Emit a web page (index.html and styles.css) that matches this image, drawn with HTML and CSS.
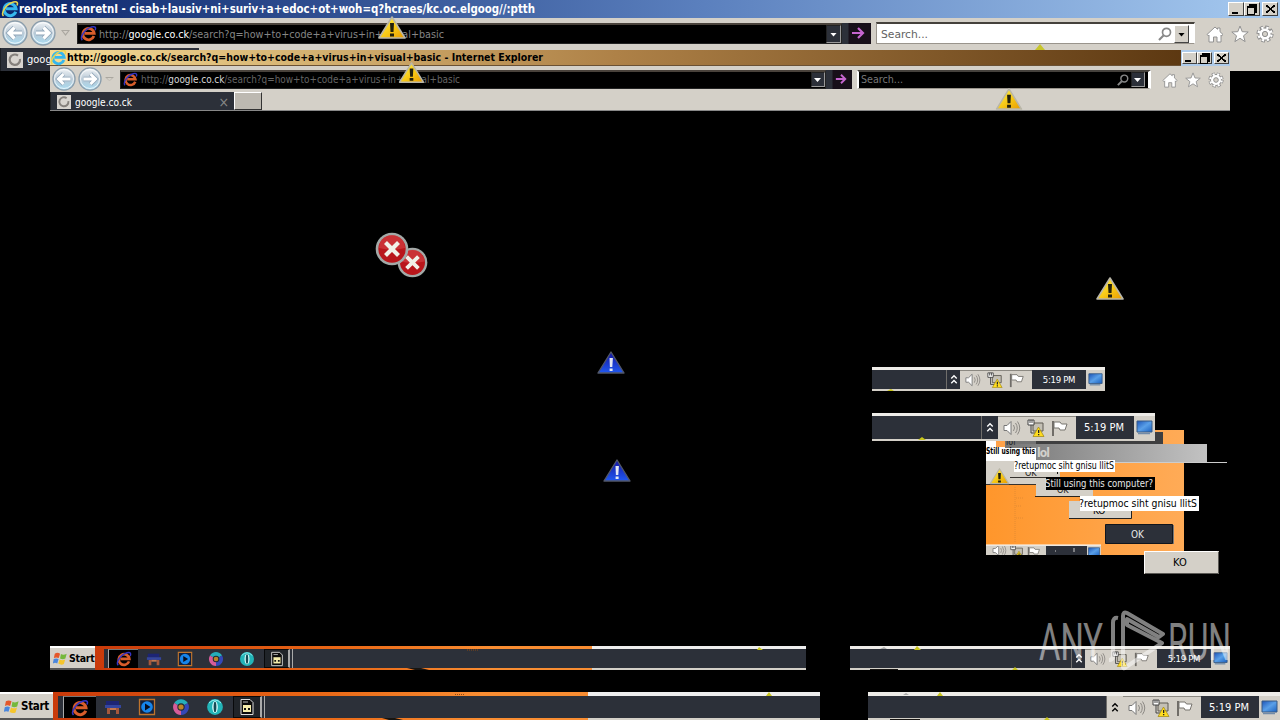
FILE: index.html
```
<!DOCTYPE html>
<html lang="en">
<head>
<meta charset="utf-8">
<title>Desktop</title>
<link rel="stylesheet" href="styles.css">
</head>
<body>
<svg class="defs" aria-hidden="true">
<defs>
<linearGradient id="yel" x1="0" y1="0" x2="1" y2="1"><stop offset="0" stop-color="#fff75a"/><stop offset=".55" stop-color="#f7c815"/><stop offset="1" stop-color="#e89a00"/></linearGradient>
<linearGradient id="blu" x1="0" y1="0" x2="0" y2="1"><stop offset="0" stop-color="#1414a0"/><stop offset="1" stop-color="#2058f0"/></linearGradient>
<linearGradient id="orb" x1="0" y1="0" x2="0" y2="1"><stop offset="0" stop-color="#f4f6f8"/><stop offset=".5" stop-color="#b9c9d6"/><stop offset="1" stop-color="#a8dcf2"/></linearGradient>
<linearGradient id="scr" x1="0" y1="0" x2="1" y2="1"><stop offset="0" stop-color="#1c54b8"/><stop offset=".5" stop-color="#5aa0e8"/><stop offset="1" stop-color="#1a60c0"/></linearGradient>
</defs>
<symbol id="warn" viewBox="0 0 28 24"><path d="M14 1 27 22H1Z" fill="url(#yel)" stroke="#b9b6a8" stroke-width="1.6" stroke-linejoin="round"/><path d="M12 7h4l-.5 9h-3zM12 17.500h4v3h-4z" fill="#22200c"/></symbol>
<symbol id="warnb" viewBox="0 0 28 24"><path d="M14 1 27 22H1Z" fill="url(#blu)" stroke="#515768" stroke-width="1.4" stroke-linejoin="round"/><path d="M12.5 7h3.400l-.6 9h-2.400zM12.600 17.500h3v2.600h-3z" fill="#e4e8f4"/></symbol>
<symbol id="err" viewBox="0 0 34 34"><circle cx="17" cy="17" r="16.300" fill="#a3aaa8"/><circle cx="17" cy="17" r="13.700" fill="#b9161b"/><path d="M4 16a13 13 0 0 1 26 0q-13 3-26 0z" fill="#d9484a" opacity=".55"/><path d="m10.500 10.500 13 13m0-13-13 13" stroke="#f1f1e8" stroke-width="4.200"/></symbol>
<symbol id="ie" viewBox="0 0 18 18"><path d="M14.700 11.700A6 6 0 1 1 15 8.800H5" fill="none" stroke="currentColor" stroke-width="3"/><path d="M2.500 16C-.5 13 5 4 12.500 2c4-1 4.500 1 3.500 3.500" fill="none" stroke="var(--ring)" stroke-width="1.600"/></symbol>
<symbol id="back" viewBox="0 0 26 26"><circle cx="13" cy="13" r="12" fill="url(#orb)" stroke="#8b9dab" stroke-width="1.300"/><circle cx="13" cy="13" r="10.300" fill="none" stroke="#fff" stroke-opacity=".8"/><path d="M20 13H7m5.500-5.500L7 13l5.500 5.500" fill="none" stroke="#8fa5b8" stroke-width="4.800"/><path d="M20 13H7m5.500-5.500L7 13l5.500 5.500" fill="none" stroke="#fff" stroke-width="3.200"/></symbol>
<symbol id="go" viewBox="0 0 14 14"><path d="M1 7h11M7 2l5 5-5 5" fill="none" stroke="#c565cf" stroke-width="2.200"/></symbol>
<symbol id="mag" viewBox="0 0 14 14"><circle cx="8.500" cy="5.300" r="4" fill="none" stroke="#888" stroke-width="1.700"/><path d="m5.500 8.500-4.500 4.500" stroke="#888" stroke-width="2.200"/></symbol>
<symbol id="home" viewBox="0 0 18 18"><path d="m1 9.500 8-7.500 2.500 2.300V3H14v3.700l3 2.800-1.300 1.300L15 10v7h-4v-5H7.500v5H3v-7l-.8.800z" fill="#fff" stroke="#929292" stroke-width="1"/></symbol>
<symbol id="star" viewBox="0 0 18 18"><path d="m9 1 2.200 5.700 6 .3-4.700 3.800 1.600 5.800L9 13.300l-5.100 3.300 1.600-5.800L.8 7l6-.3z" fill="#fff" stroke="#929292"/></symbol>
<symbol id="gear" viewBox="0 0 18 18"><circle cx="9" cy="9" r="6.900" fill="none" stroke="#8e8e8e" stroke-width="3.400" stroke-dasharray="3.400 2.020"/><circle cx="9" cy="9" r="5.900" fill="none" stroke="#8e8e8e" stroke-width="1.500"/><circle cx="9" cy="9" r="6.500" fill="none" stroke="#fff" stroke-width="2.400" stroke-dasharray="2.200 2.905" stroke-dashoffset="-.6"/><circle cx="9" cy="9" r="4.200" fill="none" stroke="#fff" stroke-width="2.800"/><circle cx="9" cy="9" r="2.600" fill="#d4d0c8" stroke="#8e8e8e"/></symbol>
<symbol id="spin" viewBox="0 0 16 16"><path d="M0 0h16v16H0z" fill="#d8d4cf"/><path d="M11 3.600A5.200 5.200 0 1 0 13 7" fill="none" stroke="#85807c" stroke-width="2.200"/></symbol>
<symbol id="win" viewBox="0 0 17 16"><path d="M2 2.500q3-2 6 0L6.500 7.500q-3-1.500-5.500 0z" fill="#e4572a"/><path d="M9 3q3 1.500 6.500-.5L14 8q-3 1.500-6 0z" fill="#74b83c"/><path d="M.8 8.700q3-1.500 5.500 0l-1.500 5q-2.500-1.500-5 0z" fill="#4a86dc"/><path d="M7.500 9q3 1.800 6.300 0l-1.500 5.300q-3 1.500-6.300-.5z" fill="#f5c52c"/></symbol>
<symbol id="lib" viewBox="0 0 18 18"><path d="M2 3h13v4H2z" fill="#1d2575"/><path d="M1 7h16v3H1z" fill="#34459e"/><path d="M3 10h3v6H3zm9 0h3v6h-3z" fill="#a4583c"/><path d="M6 10h6v2H6z" fill="#c57850"/></symbol>
<symbol id="media" viewBox="0 0 18 18"><path d="M1.500 1.500h15v15h-15z" fill="#14213c" stroke="#be742d" stroke-width="1.300"/><circle cx="9" cy="9" r="5.800" fill="#1685ec"/><path d="m7 5.500 5.500 3.500L7 12.500z" fill="#080e20"/></symbol>
<symbol id="chrome" viewBox="0 0 18 18"><path d="M9 9 2.200 5.100A7.900 7.900 0 0 1 15.800 5.100z" fill="#25aeba"/><path d="M9 9 2.200 5.100A7.900 7.900 0 0 0 9 17z" fill="#d65c99"/><path d="M9 9 15.800 5.100A7.900 7.900 0 0 1 9 17z" fill="#3448b8"/><circle cx="9" cy="9" r="3.700" fill="#222b31"/><circle cx="9" cy="9" r="2.600" fill="#bd8427"/></symbol>
<symbol id="opera" viewBox="0 0 18 18"><circle cx="9" cy="9" r="7.900" fill="#22b4b8"/><path d="M3 5Q9-1 15 5" stroke="#94eef0" fill="none"/><ellipse cx="9" cy="9" rx="2.800" ry="6" fill="#d8ffff"/><ellipse cx="9" cy="9" rx="1.400" ry="5.300" fill="#174b56"/></symbol>
<symbol id="file" viewBox="0 0 18 18"><path d="M3 1.500h9l3 3v12H3z" fill="#0b0b0b" stroke="#ddd"/><path d="M5 7h8v7H5z" fill="#f5edac"/><path d="M6 10h2v2H6zm4 0h2v2h-2z" fill="#111"/><path d="M5 4h5" stroke="#bbb"/></symbol>
<symbol id="chev" viewBox="0 0 8 12"><path d="m1 5 3-3 3 3M1 10l3-3 3 3" fill="none" stroke="currentColor" stroke-width="1.500"/></symbol>
<symbol id="sound" viewBox="0 0 18 16"><path d="M1 5.500h3L8 1.500v13L4 10.500H1z" fill="#fff" stroke="#777"/><path d="M10.500 5q2 3 0 6M12.500 3q3.500 5 0 10M14.500 1.500q4.500 6.500 0 13" fill="none" stroke="#8c8984"/></symbol>
<symbol id="net" viewBox="0 0 18 18"><path d="M6 4h10v8H6z" fill="#c4c0b5" stroke="#5e5a52"/><path d="M1 1h6v5H1z" fill="#fff" stroke="#444"/><path d="M3 1v3m2-3v3M4 6v8h6" stroke="#444" fill="none"/><path d="m11.500 8 5.500 9.500H6z" fill="#ffdc20" stroke="#9c8410" stroke-width=".7"/><path d="M11 11h1.300v3H11zm0 4h1.300v1.300H11z" fill="#222"/></symbol>
<symbol id="flag" viewBox="0 0 18 16"><path d="M2 1v15" stroke="#706d68" stroke-width="2"/><path d="M3 2h6l1.500 2H16l-2 6H9L8 8H3z" fill="#fff" stroke="#77746f"/></symbol>
<symbol id="mon" viewBox="0 0 17 15"><path d="M1 1h15v11H1z" fill="url(#scr)" stroke="#385a84"/><path d="M2 13.500h12" stroke="#718ba8" stroke-width="1.500"/></symbol>
</svg>

<main class="desktop">
<section class="window main-window">
  <header class="title">
    <svg class="logo"><use href="#ie"/></svg>
    <svg class="caption" width="520" height="18"><text x="0" y="13" textLength="516" lengthAdjust="spacingAndGlyphs">rerolpxE tenretnI - cisab+lausiv+ni+suriv+a+edoc+ot+woh=q?hcraes/kc.oc.elgoog//:ptth</text></svg>
    <div class="controls"><i class="min"></i><i class="restore"></i><i class="close"></i></div>
  </header>
  <div class="nav">
    <svg class="orb"><use href="#back"/></svg><svg class="orb next"><use href="#back"/></svg><i class="hist"></i>
    <div class="address"><svg class="fav"><use href="#ie"/></svg><svg class="url" width="360" height="20"><text y="14" textLength="345" lengthAdjust="spacingAndGlyphs">http://<tspan class="host">google.co.ck</tspan>/search?q=how+to+code+a+virus+in+visual+basic</text></svg><b class="drop"></b></div>
    <div class="go"><svg><use href="#go"/></svg></div>
    <div class="search"><svg class="query" width="60" height="20"><text y="14" textLength="47" lengthAdjust="spacingAndGlyphs">Search...</text></svg><svg class="mag"><use href="#mag"/></svg><b class="drop light"></b></div>
    <div class="tools"><svg><use href="#home"/></svg><svg><use href="#star"/></svg><svg><use href="#gear"/></svg></div>
  </div>
  <div class="tabs"><div class="tab"><svg class="spin"><use href="#spin"/></svg><span>google.co.ck</span></div></div>
</section>

<section class="window ghost-window">
  <header class="title">
    <svg class="logo"><use href="#ie"/></svg>
    <svg class="caption" width="480" height="16"><text x="0" y="11" textLength="476" lengthAdjust="spacingAndGlyphs">http://google.co.ck/search?q=how+to+code+a+virus+in+visual+basic - Internet Explorer</text></svg>
    <div class="controls"><i class="min"></i><i class="restore"></i><i class="close"></i></div>
  </header>
  <div class="nav">
    <svg class="orb"><use href="#back"/></svg><svg class="orb next"><use href="#back"/></svg><i class="hist"></i>
    <div class="address"><svg class="fav"><use href="#ie"/></svg><svg class="url" width="330" height="17"><text y="12" textLength="319" lengthAdjust="spacingAndGlyphs">http://<tspan class="host">google.co.ck</tspan>/search?q=how+to+code+a+virus+in+visual+basic</text></svg><b class="drop"></b></div>
    <div class="go"><svg><use href="#go"/></svg></div>
    <div class="search"><svg class="query" width="60" height="17"><text y="12" textLength="42" lengthAdjust="spacingAndGlyphs">Search...</text></svg><svg class="mag"><use href="#mag"/></svg><b class="drop"></b></div>
    <div class="tools"><svg><use href="#home"/></svg><svg><use href="#star"/></svg><svg><use href="#gear"/></svg></div>
  </div>
  <div class="tabs"><div class="tab"><svg class="spin"><use href="#spin"/></svg><svg width="60" height="18"><text y="13" textLength="57" lengthAdjust="spacingAndGlyphs">google.co.ck</text></svg><em>×</em></div><i class="newtab"></i></div>
</section>

<svg class="sprite w1"><use href="#warn"/></svg>
<svg class="sprite w2"><use href="#warn"/></svg>
<svg class="sprite w3"><use href="#warn"/></svg>
<svg class="sprite w4"><use href="#warn"/></svg>
<svg class="sprite b1"><use href="#warnb"/></svg>
<svg class="sprite b2"><use href="#warnb"/></svg>
<svg class="sprite e2"><use href="#err"/></svg>
<svg class="sprite e1"><use href="#err"/></svg>
<i class="tip"></i>

<section class="popup">
  <svg width="245" height="150" viewBox="986 430 245 150">
    <defs>
      <linearGradient id="bar"><stop offset="0" stop-color="#777"/><stop offset="1" stop-color="#c2c2c2"/></linearGradient>
      <linearGradient id="wall"><stop offset="0" stop-color="#ff962b"/><stop offset="1" stop-color="#ffab57"/></linearGradient>
    </defs>
    <path d="M986 430h198v125H986z" fill="url(#wall)"/>
    <path d="M1015 487v55M1016 498h7m-7 8h5m-5 12h7" stroke="#e48b32" stroke-dasharray="1 1" fill="none"/>
    <path d="M1005 432h158v12h-158z" fill="#3f3f40"/><path d="M1005 441h31v8h-31z" fill="#737373"/>
    <path d="M986 441h10v5h40v17h-50z" fill="#fff"/><path d="M996 441h9v6h-9z" fill="#ffa34a"/>
    <path d="M1005 444h202v4h-202zM1036 444h171v18h-171z" fill="url(#bar)"/><path d="M1036 462.500h191" stroke="#ccc"/>
    <text x="1006" y="445" class="tiny">lol</text>
    <text x="1037" y="457" class="bar-title" textLength="13">lol</text>
    <text x="986" y="454" class="bold" textLength="49" lengthAdjust="spacingAndGlyphs">Still using this</text>
    <path d="M986 461h74v23h-74z" fill="#d4d0c8"/><path d="M986 484.500h50M1010 477.500h48" stroke="#36322e"/>
    <text x="1025" y="476" class="tiny">OK</text>
    <path d="M1036 479h57v17h-57z" fill="#d4d0c8"/><path d="M1035 496.500h58" stroke="#29251f"/><text x="1057" y="493" class="tiny">OK</text>
    <path d="M1065 462v7M1057.500 462v12" stroke="#111"/>
    <path d="M1014 460h101v12h-101z" fill="#fff"/><text x="1014" y="469" class="word" textLength="100" lengthAdjust="spacingAndGlyphs">?retupmoc siht gnisu llitS</text>
    <path d="M1046 477h109v13h-109z" fill="#000"/><text x="1045" y="487" class="word inv" textLength="108" lengthAdjust="spacingAndGlyphs">Still using this computer?</text>
    <path d="M1069 501h62v17h-62z" fill="#d4d0c8"/><path d="M1069 518.500h62.500v-8" fill="none" stroke="#222"/><text x="1093" y="514" class="word">KO</text>
    <path d="M1080 496h119v15h-119z" fill="#fff"/><text x="1079" y="507" class="word big" textLength="118" lengthAdjust="spacingAndGlyphs">?retupmoc siht gnisu llitS</text>
    <path d="M1105.500 524.500h67v19h-67z" fill="#2c3039" stroke="#11151c"/><path d="M1173.500 525v19" stroke="#777"/><text x="1131" y="538" class="word inv">OK</text>
    <use href="#warn" x="988" y="468" width="23" height="17"/>
    <path d="M986 545h115v10H986z" fill="#d4d0c8"/><path d="M986 545h115" stroke="#fff"/><path d="M1046 546h41v9h-41z" fill="#2c3039"/>
    <svg x="986" y="546" width="115" height="9" viewBox="986 546 115 9"><use href="#sound" x="992" y="544" width="15" height="13"/><use href="#net" x="1010" y="545" width="14" height="14"/><use href="#flag" x="1027" y="546" width="14" height="13"/><use href="#mon" x="1087" y="547" width="14" height="11"/><path d="M1055 551h1m18-3v4" stroke="#ccc"/></svg>
    <path d="M1144 551h75v23h-75z" fill="#d4d0c8"/><path d="M1144.500 573v-21.500h73" fill="none" stroke="#fff"/><path d="M1145 573.500h73.500V552" fill="none" stroke="#5b5955"/><text x="1173" y="566" class="word big">KO</text>
  </svg>
</section>

<section class="strip strip-a"><div class="tray"><b><svg class="ch"><use href="#chev"/></svg></b><div><svg><use href="#sound"/></svg><svg><use href="#net"/></svg><svg><use href="#flag"/></svg></div><time>5:19 PM</time><svg class="mon"><use href="#mon"/></svg></div></section>
<section class="strip strip-b"><div class="tray"><b><svg class="ch"><use href="#chev"/></svg></b><div><svg><use href="#sound"/></svg><svg><use href="#net"/></svg><svg><use href="#flag"/></svg></div><time>5:19 PM</time><svg class="mon"><use href="#mon"/></svg></div></section>

<footer class="taskbar upper">
  <div class="start"><svg><use href="#win"/></svg><strong>Start</strong></div>
  <div class="tasks"><div class="apps"><span class="active"><svg class="task-ie"><use href="#ie"/></svg></span><span><svg><use href="#lib"/></svg></span><span><svg><use href="#media"/></svg></span><span><svg><use href="#chrome"/></svg></span><span><svg><use href="#opera"/></svg></span><span class="open"><svg><use href="#file"/></svg></span></div></div>
  <div class="idle"></div><div class="gap"></div>
  <div class="strip end"><div class="tray"><b><svg class="ch"><use href="#chev"/></svg></b><div><svg><use href="#sound"/></svg><svg><use href="#net"/></svg><svg><use href="#flag"/></svg></div><time>5:19 PM</time><svg class="mon"><use href="#mon"/></svg></div></div>
</footer>
<footer class="taskbar lower">
  <div class="start"><svg><use href="#win"/></svg><strong>Start</strong></div>
  <div class="tasks"><div class="apps"><span class="active"><svg class="task-ie"><use href="#ie"/></svg></span><span><svg><use href="#lib"/></svg></span><span><svg><use href="#media"/></svg></span><span><svg><use href="#chrome"/></svg></span><span><svg><use href="#opera"/></svg></span><span class="open"><svg><use href="#file"/></svg></span></div></div>
  <div class="idle"></div><div class="gap"></div>
  <div class="strip end"><div class="tray"><b><svg class="ch"><use href="#chev"/></svg></b><div><svg><use href="#sound"/></svg><svg><use href="#net"/></svg><svg><use href="#flag"/></svg></div><time>5:19 PM</time><svg class="mon"><use href="#mon"/></svg></div></div>
</footer>
<svg class="marks" viewBox="0 0 1280 720"><path d="m757 650 2-3 4 3zM914 650l3-4 4 4zM1012 670l3-3 3 3zM766 696l3-4 3 4zM937 696l3-4 3 4zM1044 720l3-3 3 3zM887 391l4-2 3 2zM918 440l4-3 4 3z" fill="#c9c51c"/><path d="m880 649 4-2 3 2zm23 46 3-2 3 2z" fill="#aaa"/><path d="m407 668 14 0 8 2h-14zM382 718h13l8 2h-14zM870 669h28v1h-28zM890 719h30v1h-30z" fill="#181512"/><path d="M467 650h12M455 694.500h10" stroke="#8c4a15" stroke-dasharray="1 1"/></svg>

<svg class="watermark" width="200" height="66" viewBox="1036 608 200 66">
  <text x="1039" y="660" textLength="64" lengthAdjust="spacingAndGlyphs">ANY</text><text x="1168" y="660" textLength="63" lengthAdjust="spacingAndGlyphs">RUN</text>
  <path d="M1118 618Q1113 617 1113 623V656Q1113 660 1109 660"/>
  <path d="M1123 668V616Q1123 611 1127 613L1163 634L1159 637L1127 619V625L1162 643L1126 667Q1123 670 1123 666"/>
</svg>
</main>
</body>
</html>
```
FILE: styles.css
```
* { box-sizing: border-box; }
body { margin: 0; background: #000; font: 11px "DejaVu Sans Condensed", "DejaVu Sans", sans-serif; }
.defs { position: absolute; width: 0; height: 0; }
.desktop { position: relative; width: 1280px; height: 720px; overflow: hidden; background: #000; }
svg { display: block; flex: none; overflow: hidden; }
i, em { font-style: normal; }

.window { position: absolute; background: #d4d0c8; overflow: hidden; }
.main-window { left: 0; top: 0; width: 1280px; height: 71px; }
.ghost-window { left: 50px; top: 50px; width: 1180px; height: 61px; border-bottom: 1px solid #888; }
.title { display: flex; align-items: center; height: 18px; background: linear-gradient(90deg, #0a246a, #5b80be 55%, #a6caf0); }
.logo { width: 18px; height: 18px; margin: 0 0 0 1px; color: #35b7ee; --ring: #e9d54d; }
.caption text { font: bold 11.5px "DejaVu Sans Condensed", sans-serif; fill: #fff; }
.controls { display: flex; margin-left: auto; margin-right: 2px; }
.controls i { width: 16px; height: 14px; background: #d4d0c8; border: 1px solid; border-color: #fff #404040 #404040 #fff; display: grid; place-items: center; }
.controls .close { margin-left: 2px; }
.controls i::before { content: ""; }
.min::before { width: 6px; height: 2px; background: #000; margin-top: 7px; margin-right: 3px; }
.controls .restore { padding: 2px 2px 0 0; }
.restore::before { width: 6px; height: 6px; border: 1px solid #000; border-top-width: 2px; background: #d4d0c8; box-shadow: 2px -2px 0 0 #000; }
.close::before { width: 9px; height: 8px; background: linear-gradient(42deg, transparent 42%, #000 43% 57%, transparent 58%), linear-gradient(-42deg, transparent 42%, #000 43% 57%, transparent 58%); }

.nav { display: flex; align-items: center; height: 30px; padding-left: 2px; }
.orb { width: 26px; height: 26px; }
.next { transform: scaleX(-1); margin-left: 2px; }
.hist { width: 9px; height: 6px; margin: 0 7px 0 5px; background: #aaa7a0; clip-path: polygon(0 0, 100% 0, 50% 100%); }
.hist::before { content: ""; display: block; width: 5px; height: 3px; margin: 1px auto; background: #d4d0c8; clip-path: polygon(0 0, 100% 0, 50% 100%); }
.address { display: flex; align-items: center; width: 765px; height: 21px; background: #000; border: 1px solid #222; border-top: 2px solid #49423b; }
.fav, .task-ie { color: #d85d2b; --ring: #3434c4; }
.fav { width: 17px; height: 17px; margin: 0 2px 0 2px; }
.url text { fill: #858585; font-size: 11px; }
.url .host { fill: #fff; }
.drop { display: block; width: 15px; height: 18px; margin-left: auto; padding: 7px 3px; background: #2c3039; border: 1px solid #999; border-left-color: #222; border-top-color: #222; }
.drop::before { content: ""; display: block; width: 7px; height: 4px; background: #fff; clip-path: polygon(0 0, 100% 0, 50% 100%); }
.light { background: #d4d0c8; border-color: #fff #444 #444 #fff; margin-left: 2px; }
.light::before { background: #000; }
.go { width: 29px; height: 21px; display: grid; place-items: center; padding-left: 3px; background: linear-gradient(90deg, #2c3039 6px, #170f19 7px); }
.go svg { width: 14px; height: 14px; }
.search { display: flex; align-items: center; width: 319px; height: 22px; margin-left: 5px; padding: 0 5px 0 4px; background: #fff; border: 1px solid #99948c; border-top: 2px solid #45413c; border-right-color: #fff; }
.query text { fill: #626262; font-size: 11px; }
.mag { width: 14px; height: 14px; margin-left: auto; }
.search .drop { margin-left: 2px; }
.tools { display: flex; gap: 7px; margin-left: 11px; padding-top: 2px; }
.tools svg { width: 18px; height: 18px; }
.tabs { display: flex; height: 23px; }
.tab { display: flex; align-items: center; width: 199px; padding-left: 6px; background: #2c3039; border-left: 1px solid #1b1e22; color: #fff; }
.spin { width: 16px; height: 16px; margin-right: 4px; }
.tab text { fill: #fff; font-size: 10px; }
.tab em { margin: 0 5px 0 auto; color: #888; font-size: 14px; }

.ghost-window .title { height: 16px; background: linear-gradient(90deg, #f5db95, #ae8147 48%, #59350f 98%); border-bottom: 1px solid #6b5134; }
.ghost-window .logo { width: 17px; height: 17px; margin: 0; }
.ghost-window .caption text { fill: #000; font-size: 10px; }
.ghost-window .controls { margin: 0 0 0 auto; height: 16px; padding: 2px 1px 0; background: #aecbea; }
.ghost-window .controls i { width: 15px; height: 12px; }
.ghost-window .nav { height: 26px; padding-left: 2px; }
.ghost-window .orb { width: 24px; height: 24px; }
.ghost-window .hist { margin: 0 6px 0 3px; height: 4px; }
.ghost-window .address { width: 706px; height: 19px; }
.ghost-window .fav { width: 15px; height: 15px; margin: 0 3px 0 2px; }
.ghost-window .url text { fill: #656565; font-size: 10px; }
.ghost-window .url .host { fill: #d8d8d8; }
.ghost-window .drop { height: 15px; width: 14px; padding: 5px 2px; }
.ghost-window .go { width: 26px; height: 19px; padding-left: 4px; }
.ghost-window .go svg { width: 12px; }
.ghost-window .search { width: 294px; height: 19px; padding: 0 3px 0 2px; background: #000; border-left: 2px solid #fff; border-right: 3px solid #fff; }
.ghost-window .query text { fill: #777; font-size: 10px; }
.ghost-window .mag { width: 12px; height: 12px; }
.ghost-window .tools { margin-left: 11px; gap: 7px; }
.ghost-window .tools svg { width: 16px; height: 16px; }
.ghost-window .tabs { height: 19px; }
.ghost-window .tab { width: 184px; padding-left: 6px; }
.ghost-window .spin { width: 14px; height: 14px; margin-right: 4px; }
.newtab { width: 28px; height: 18px; background: #bdb9b1; border: 1px solid; border-color: #fff #333 #333 #fff; }

.sprite { position: absolute; width: 28px; height: 24px; }
.w1 { left: 377px; top: 16px; width: 30px; }
.w2 { left: 398px; top: 62px; width: 27px; height: 22px; }
.w3 { left: 995px; top: 88px; height: 23px; }
.w4 { left: 1096px; top: 277px; }
.b1 { left: 597px; top: 351px; }
.b2 { left: 603px; top: 459px; }
.e1 { left: 375px; top: 232px; width: 34px; height: 34px; }
.e2 { left: 397px; top: 246px; width: 31px; height: 33px; }
.tip { position: absolute; left: 1035px; top: 44px; width: 10px; height: 6px; background: #c7c52c; clip-path: polygon(50% 0, 100% 100%, 0 100%); }

.popup { position: absolute; left: 986px; top: 430px; }
.popup .tiny { font-size: 9px; fill: #222; }
.popup .bar-title { font-weight: bold; font-size: 12px; fill: #d2d0cb; }
.popup .bold { font-weight: bold; font-size: 8px; }
.popup .word { font-size: 10px; }
.popup .inv { fill: #e8e8e8; }
.popup .big { font-size: 11px; }

.strip { display: flex; justify-content: flex-end; background: #2c3039; border-top: 3px solid #eeece8; border-bottom: 2px solid #d4d0c8; overflow: hidden; }
.strip-a { position: absolute; left: 872px; top: 367px; width: 233px; height: 24px; }
.strip-b { position: absolute; left: 872px; top: 413px; width: 283px; height: 28px; }
.tray { display: flex; width: 159px; }
.tray b { display: grid; place-items: center; width: 14px; color: #fff; border-left: 1px solid #706e6b; }
.tray .ch { width: 8px; height: 11px; }
.tray > div { width: 72px; background: #d4d0c8; border-top: 1px solid #8b8881; display: flex; align-items: center; gap: 6px; padding-left: 5px; }
.tray > div svg { width: 16px; height: 16px; }
.tray time { width: 54px; color: #fff; display: grid; place-items: center; font-size: 9.5px; letter-spacing: -.3px; }
.mon { width: 19px; height: 19px; padding: 2px; background: #d4d0c8; }
.strip-b .tray, .lower .tray { width: 174px; }
.strip-b b, .lower b { width: 17px; }
.strip-b .tray > div, .lower .tray > div { width: 78px; }
.strip-b time, .lower time { width: 58px; padding-right: 2px; font-size: 11px; letter-spacing: 0; }
.strip-b .mon, .lower .mon { width: 21px; height: 23px; padding: 3px 2px; }
.strip-b .tray > div svg, .lower .tray > div svg { width: 18px; height: 18px; }

.taskbar { position: absolute; display: flex; }
.upper { left: 50px; top: 646px; width: 1180px; height: 24px; }
.lower { left: 0; top: 692px; width: 1280px; height: 28px; }
.start { width: 45px; background: #d4d0c8; display: flex; align-items: center; gap: 1px; padding-left: 3px; overflow: hidden; border-top: 2px solid #fff; border-bottom: 2px solid #555; }
.start svg { width: 15px; height: 15px; }
.start strong { font-size: 10.5px; letter-spacing: -.3px; }
.tasks { width: 497px; padding: 3px 0 2px 9px; background: linear-gradient(90deg, #c93a0a, #ea6816 50%, #f98d32 80%); }
.apps { display: flex; height: 100%; background: #2c3039; padding-left: 4px; }
.apps span { width: 31px; display: grid; place-items: center; }
.apps svg { width: 16px; height: 16px; }
.apps .active { background: #000; width: 30px; border-left: 1px solid #aaa; border-top: 1px solid #777; }
.apps .open { width: 26px; margin-left: 2px; background: #202429; border: 1px solid #08090b; border-right: 2px solid #aaa; box-shadow: 2px 0 #2c3039, 3px 0 #aaa; }
.idle { width: 214px; background: #2c3039; border-top: 3px solid #eee; border-bottom: 2px solid #d4d0c8; }
.gap { width: 44px; }
.end { flex: 1; }
.lower .start { width: 53px; padding-left: 4px; }
.lower .start svg { width: 16px; height: 17px; }
.lower .start strong { font-size: 11.5px; }
.lower .tasks { width: 535px; padding: 4px 0 2px 5px; }
.lower .apps { padding-left: 5px; }
.lower .apps span { width: 34px; }
.lower .apps .active { width: 33px; }
.lower .apps .open { width: 29px; margin-left: 1px; }
.lower .apps svg { width: 18px; height: 18px; }
.lower .idle { width: 232px; border-top-width: 4px; }
.lower .gap { width: 48px; }
.lower .strip { border-top-width: 4px; }
.lower b { background: #d4d0c8; color: #000; }
.marks { position: absolute; left: 0; top: 0; width: 1280px; height: 720px; }
.watermark { position: absolute; left: 1036px; top: 608px; opacity: .5; }
.watermark text { font: 400 52px Roboto, sans-serif; fill: #fff; }
.watermark path { fill: none; stroke: #fff; stroke-width: 4; stroke-linejoin: round; }
```
